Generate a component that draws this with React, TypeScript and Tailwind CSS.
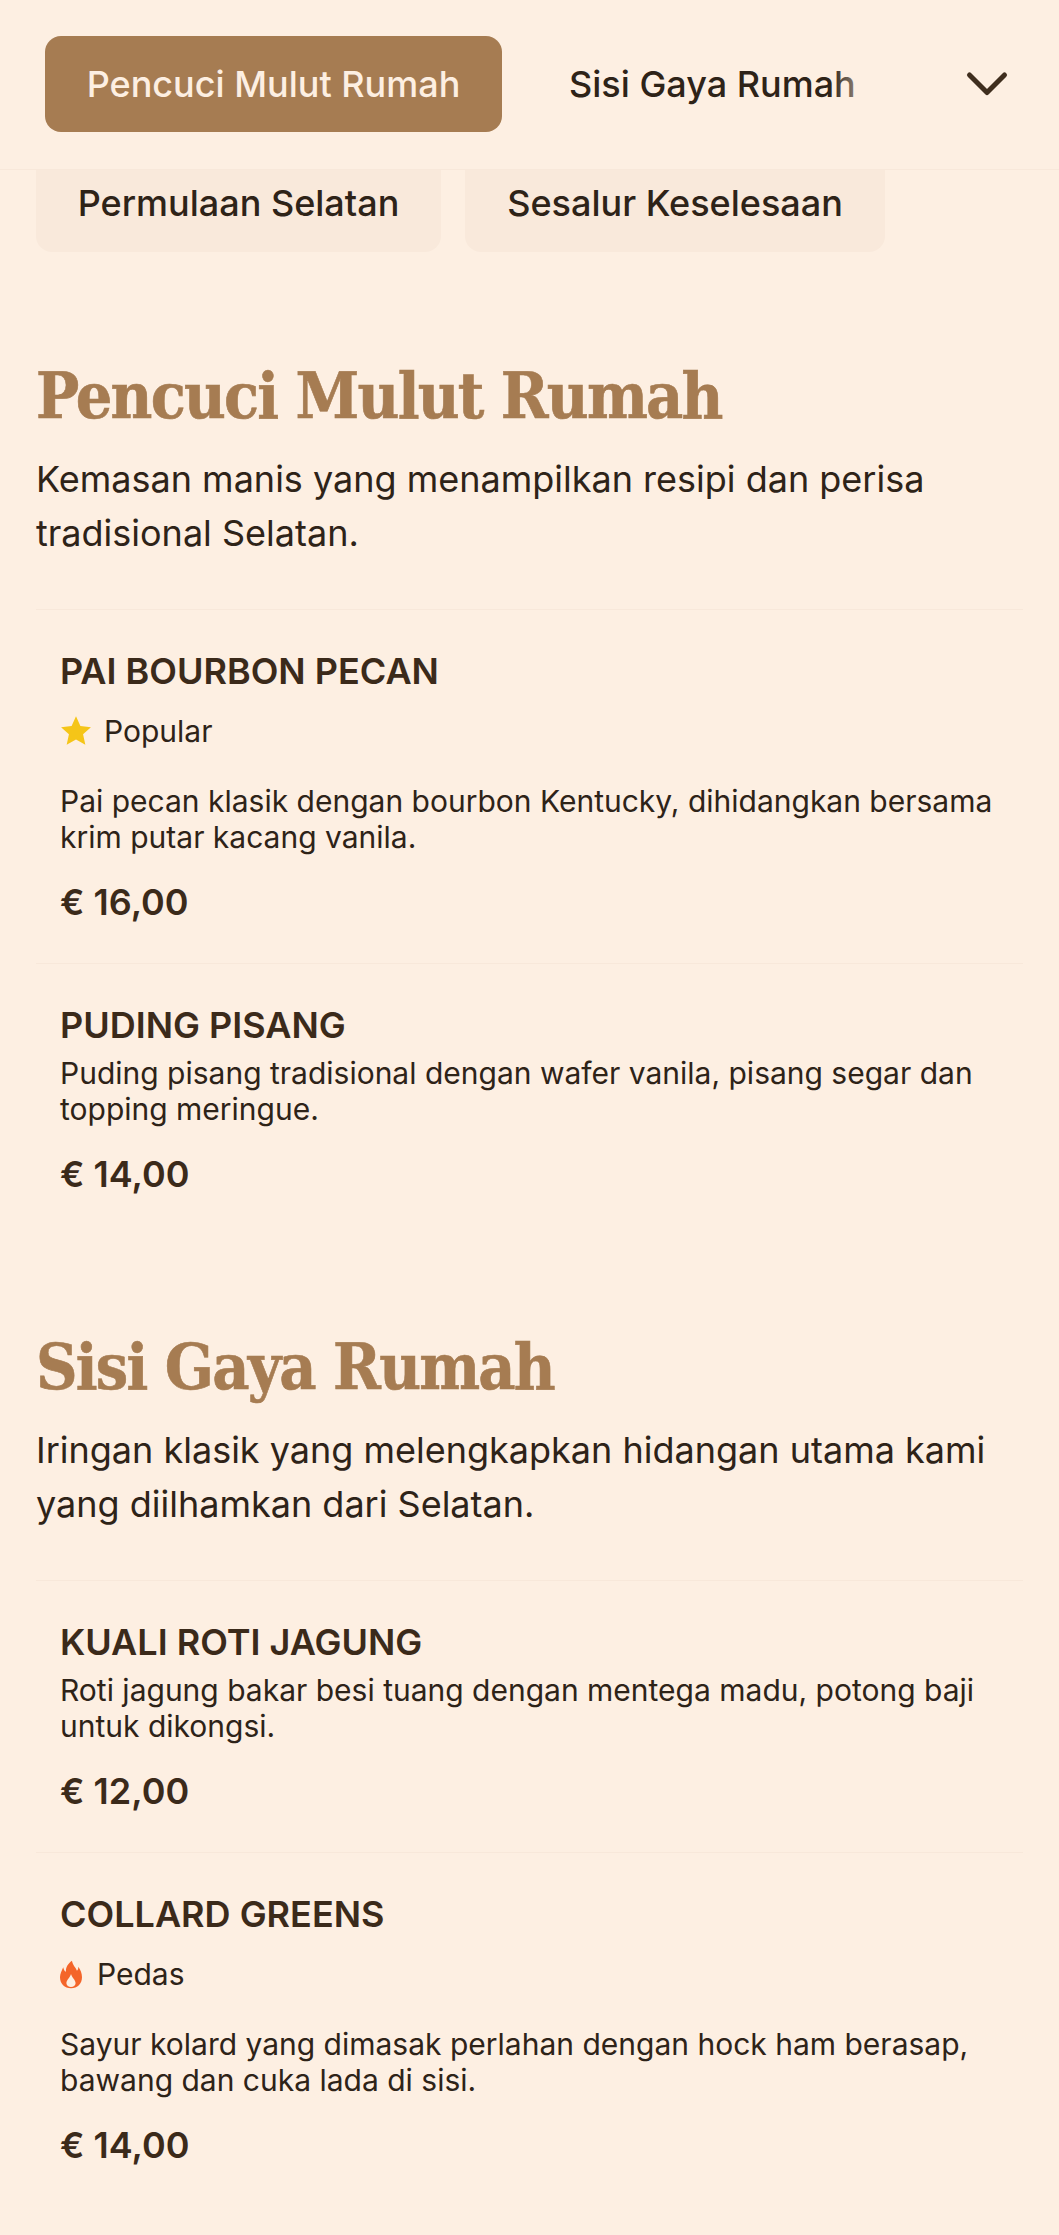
import { ReactNode } from "react";

const sansFont = "font-['Inter','Noto_Sans',sans-serif]";

function StarIcon() {
  return (
    <svg viewBox="0 0 24 24" className="h-[32px] w-[32px] shrink-0" fill="#f5c518">
      <path d="M12 1l3.300 7.300 7.900.9-5.900 5.300 1.700 7.800L12 18.400 5 22.300l1.700-7.800L.8 9.200l7.900-.9z" />
    </svg>
  );
}

function FlameIcon() {
  return (
    <svg viewBox="0 0 24 30" className="mr-[3px] h-[31px] w-[22px] shrink-0" fill="#f4652a" fillRule="evenodd">
      <path d="M13 0C14 5 17 7 18.500 11 19.500 10 20 8.500 20 6.500 22.500 10 24 14 24 18 24 25 19 30 12 30 5 30 0 25 0 18 0 14 2 11 3.500 7 4 9.500 5 11.500 6.500 12 6 7 9 3 13 0ZM12 14.500C11 18.500 7 21 7 24.500 7 27 9.500 28.500 12 28.500 14.500 28.500 17 27 17 24.500 17 21 13 18.500 12 14.500Z" />
    </svg>
  );
}

function MenuItem({ name, badge, text, price }: { name: string; badge?: ReactNode; text: string; price: string }) {
  return (
    <div className="border-t border-[#f8e8da] px-[24px] pt-[38px] pb-[38px]">
      <h3 className="text-[36px] leading-[46px] font-semibold text-[#3b2a1a]">{name}</h3>
      {badge}
      <p className="mt-[7px] text-[30px] leading-[36px] text-[#2e2318]">{text}</p>
      <p className="mt-[24px] text-[36px] leading-[46px] font-semibold text-[#3b2a1a]">{price}</p>
    </div>
  );
}

function Badge({ icon, label }: { icon: ReactNode; label: string }) {
  return (
    <div className="mt-[18px] mb-[33px] flex h-[38px] items-center gap-[12px] text-[30px] text-[#2e2318]">
      {icon}
      <span>{label}</span>
    </div>
  );
}

function Section({ title, text, children }: { title: string; text: string; children: ReactNode }) {
  return (
    <section>
      <h2 className="font-['DejaVu_Serif_Condensed','DejaVu_Serif',serif] text-[64px] leading-[80px] font-bold tracking-[-1.800px] text-[#a67c52] [-webkit-text-stroke:0.6px_#a67c52]">
        {title}
      </h2>
      <p className="mt-[16px] mb-[49px] text-[36px] leading-[54px] text-[#2e2318]">{text}</p>
      {children}
    </section>
  );
}

export default function App() {
  return (
    <div className={`${sansFont} min-h-[2235px] w-full overflow-hidden bg-[#fdefe2]`}>
      {/* 상단 탭 */}
      <div className="relative z-10 flex h-[170px] items-center border-b border-[#f8e8da] bg-[#fdefe2] pr-[50px] pb-[1px] pl-[45px]">
        <button className="flex h-[96px] w-[457px] shrink-0 items-center justify-center rounded-[16px] bg-[#a67c52] text-[36px] font-medium text-[#fdefe2]">
          Pencuci Mulut Rumah
        </button>
        <div className="relative ml-[67px] min-w-0 flex-1 overflow-hidden text-[36px] font-medium whitespace-nowrap text-[#2e2318]">
          Sisi Gaya Rumah
          <div className="absolute top-0 left-[262px] h-full w-[28px] bg-gradient-to-r from-transparent to-[#fdefe2]/50" />
        </div>
        <svg viewBox="0 0 44 28" className="h-[28px] w-[44px] shrink-0" fill="none" stroke="#3f2e1e" strokeWidth="5" strokeLinecap="round" strokeLinejoin="round">
          <path d="M4.500 5L22 22.500 39.500 5" />
        </svg>
      </div>

      <div className="-mt-[16px] flex gap-[24px] px-[36px]">
        <div className="flex h-[98px] w-[405px] items-center justify-center rounded-[16px] bg-[#f9e9db] text-[36px] font-medium text-[#2e2318]">
          Permulaan Selatan
        </div>
        <div className="flex h-[98px] w-[420px] items-center justify-center rounded-[16px] bg-[#f9e9db] text-[36px] font-medium text-[#2e2318]">
          Sesalur Keselesaan
        </div>
      </div>

      <main className="px-[36px] pt-[104px]">
        <Section title="Pencuci Mulut Rumah" text="Kemasan manis yang menampilkan resipi dan perisa tradisional Selatan.">
          <MenuItem
            name="PAI BOURBON PECAN"
            badge={<Badge icon={<StarIcon />} label="Popular" />}
            text="Pai pecan klasik dengan bourbon Kentucky, dihidangkan bersama krim putar kacang vanila."
            price="€ 16,00"
          />
          <MenuItem
            name="PUDING PISANG"
            text="Puding pisang tradisional dengan wafer vanila, pisang segar dan topping meringue."
            price="€ 14,00"
          />
        </Section>
        <div className="mt-[92px]">
          <Section title="Sisi Gaya Rumah" text="Iringan klasik yang melengkapkan hidangan utama kami yang diilhamkan dari Selatan.">
            <MenuItem
              name="KUALI ROTI JAGUNG"
              text="Roti jagung bakar besi tuang dengan mentega madu, potong baji untuk dikongsi."
              price="€ 12,00"
            />
            <MenuItem
              name="COLLARD GREENS"
              badge={<Badge icon={<FlameIcon />} label="Pedas" />}
              text="Sayur kolard yang dimasak perlahan dengan hock ham berasap, bawang dan cuka lada di sisi."
              price="€ 14,00"
            />
          </Section>
        </div>
      </main>
    </div>
  );
}
